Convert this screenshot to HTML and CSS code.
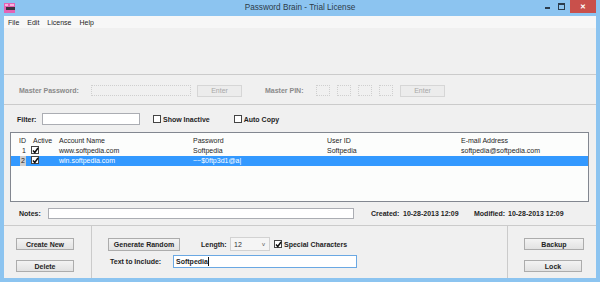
FILE: index.html
```html
<!DOCTYPE html>
<html>
<head>
    <title>Password Brain - Trial License</title>
    <link rel="stylesheet" href="styles.css">
</head>
<body>

<div class="window">
    <div class="titlebar">
        <svg class="appIcon" width="11" height="10" viewBox="0 0 11 10">
            <rect x="0" y="0" width="11" height="10" fill="#e563b4"/>
            <rect x="1" y="1" width="3" height="2" fill="#f7b3dc"/>
            <rect x="6" y="1" width="4" height="2" fill="#f7b3dc"/>
            <rect x="2" y="4" width="9" height="3" fill="#3a3540"/>
        </svg>
        <div class="title">Password Brain - Trial License</div>
        <div class="controls">
            <span class="ctl minBtn"></span>
            <span class="ctl maxBtn"></span>
            <span class="closeBtn">✕</span>
        </div>
    </div>

    <div class="client">
        <div class="menubar">
            <span>File</span>
            <span>Edit</span>
            <span>License</span>
            <span>Help</span>
        </div>

        <div class="spacer"></div>

        <div class="master">
            <span class="lbl dim pwLabel">Master Password:</span>
            <span class="field off pwField"></span>
            <span class="btn off enterBtn">Enter</span>
            <span class="lbl dim pinLabel">Master PIN:</span>
            <span class="field off pin"></span>
            <span class="field off pin"></span>
            <span class="field off pin"></span>
            <span class="field off pin"></span>
            <span class="btn off enterBtn">Enter</span>
        </div>

        <div class="filterRow">
            <span class="lbl filterLabel">Filter:</span>
            <span class="field filterField"></span>
            <span class="cb showInactive"></span>
            <span class="lbl">Show Inactive</span>
            <span class="cb autoCopy"></span>
            <span class="lbl">Auto Copy</span>
        </div>

        <div class="list">
            <table id="myTable">
                <colgroup>
                    <col class="cId">
                    <col class="cActive">
                    <col class="cWide">
                    <col class="cWide">
                    <col class="cWide">
                    <col>
                </colgroup>
                <thead>
                    <tr>
                        <th class="idCol">ID</th>
                        <th class="activeCol">Active</th>
                        <th>Account Name</th>
                        <th>Password</th>
                        <th>User ID</th>
                        <th>E-mail Address</th>
                    </tr>
                </thead>
                <tbody id="tableBody">
                    <tr>
                        <td class="idCol">1</td>
                        <td class="activeCol"><span class="cb on"><svg width="7" height="7" viewBox="0 0 7 7"><polyline points="1,3.5 2.8,5.5 6,1" fill="none" stroke="#111" stroke-width="1.5"/></svg></span></td>
                        <td>www.softpedia.com</td>
                        <td>Softpedia</td>
                        <td>Softpedia</td>
                        <td>softpedia@softpedia.com</td>
                    </tr>
                    <tr class="selected">
                        <td class="idCol"><span class="idMark">2</span></td>
                        <td class="activeCol"><span class="cb on"><svg width="7" height="7" viewBox="0 0 7 7"><polyline points="1,3.5 2.8,5.5 6,1" fill="none" stroke="#111" stroke-width="1.5"/></svg></span></td>
                        <td>win.softpedia.com</td>
                        <td>~~$0ftp3d1@a|</td>
                        <td></td>
                        <td></td>
                    </tr>
                </tbody>
            </table>
        </div>

        <div class="notesRow">
            <span class="lbl notesLabel">Notes:</span>
            <span class="field notesField"></span>
            <span class="lbl createdLabel">Created:</span>
            <span class="lbl dateVal">10-28-2013 12:09</span>
            <span class="lbl modifiedLabel">Modified:</span>
            <span class="lbl dateVal">10-28-2013 12:09</span>
        </div>

        <div class="bottom">
            <div class="leftCol">
                <span class="btn sideBtn">Create New</span>
                <span class="btn sideBtn">Delete</span>
            </div>
            <div class="midCol">
                <div class="genRow">
                    <span class="btn genBtn">Generate Random</span>
                    <span class="lbl lengthLabel">Length:</span>
                    <span class="select"><span>12</span><span class="chev">v</span></span>
                    <span class="cb on specialCb"><svg width="7" height="7" viewBox="0 0 7 7"><polyline points="1,3.5 2.8,5.5 6,1" fill="none" stroke="#111" stroke-width="1.5"/></svg></span>
                    <span class="lbl">Special Characters</span>
                </div>
                <div class="includeRow">
                    <span class="lbl includeLabel">Text to Include:</span>
                    <span class="field focus includeField">Softpedia<span class="caret"></span></span>
                </div>
            </div>
            <div class="rightCol">
                <span class="btn backupBtn">Backup</span>
                <span class="btn lockBtn">Lock</span>
            </div>
        </div>
    </div>
</div>

</body>
</html>
```

FILE: styles.css
```css
body {
    margin: 0;
    font-family: "Liberation Sans", Arial, sans-serif;
    font-size: 7px;
    color: #1e1e1e;
}

.window {
    width: 600px;
    height: 282px;
    background-color: #8cc4f0;
    padding: 0 4px 4px 4px;
    box-sizing: border-box;
    display: flex;
    flex-direction: column;
}

.titlebar {
    height: 16px;
    display: flex;
    align-items: flex-start;
    position: relative;
}

.appIcon {
    margin-top: 3px;
}

.title {
    position: absolute;
    left: 0;
    right: 0;
    top: 3px;
    text-align: center;
    font-size: 8.2px;
    color: #2c3b48;
}

.controls {
    margin-left: auto;
    display: flex;
    align-items: flex-start;
}

.ctl {
    display: inline-block;
    margin-top: 4px;
}

.minBtn {
    width: 5px;
    height: 2px;
    background-color: #2b3c4c;
    margin-top: 7px;
    margin-right: 8px;
}

.maxBtn {
    width: 5px;
    height: 4px;
    border: 1px solid #2b3c4c;
    border-top-width: 2px;
    margin-top: 3px;
    margin-right: 5px;
}

.closeBtn {
    width: 26px;
    height: 13px;
    background-color: #c9504b;
    color: white;
    font-size: 7px;
    font-weight: bold;
    text-align: center;
    line-height: 13px;
}

.client {
    flex: 1;
    background-color: #f0f0f0;
    display: flex;
    flex-direction: column;
}

.menubar {
    height: 12px;
    background-color: #f7f7f7;
    display: flex;
    align-items: center;
    padding-left: 4px;
    gap: 8px;
}

.spacer {
    height: 46px;
}

.lbl {
    font-weight: bold;
    white-space: nowrap;
}

.dim {
    color: #8a8a8a;
}

.field {
    display: inline-block;
    box-sizing: border-box;
    background-color: white;
    border: 1px solid #abadb3;
}

.field.off {
    background-color: #f0f0f0;
    border: 1px dotted #cfcfcf;
}

.btn {
    display: inline-flex;
    align-items: center;
    justify-content: center;
    box-sizing: border-box;
    font-weight: bold;
    background: linear-gradient(#f3f3f3, #e2e2e2);
    border: 1px solid #acacac;
    color: #1e1e1e;
}

.btn.off {
    background: #ececec;
    border: 1px solid #d6d6d6;
    color: #a8a8a8;
}

.master {
    height: 31px;
    box-sizing: border-box;
    border-top: 1px solid #cbcbcb;
    border-bottom: 1px solid #cbcbcb;
    display: flex;
    align-items: center;
    padding: 2px 0 0 15px;
}

.pwLabel {
    width: 72px;
}

.pwField {
    width: 100px;
    height: 11px;
}

.enterBtn {
    width: 45px;
    height: 12px;
    margin-left: 6px;
    font-weight: normal;
}

.pinLabel {
    margin-left: 23px;
    width: 51px;
}

.pin {
    width: 14px;
    height: 11px;
    margin-right: 7px;
}

.pin + .enterBtn {
    margin-left: 0;
}

.filterRow {
    height: 26px;
    display: flex;
    align-items: center;
    padding: 1px 0 0 13px;
}

.filterLabel {
    width: 25px;
}

.filterField {
    width: 98px;
    height: 12px;
}

.cb {
    display: inline-block;
    box-sizing: border-box;
    width: 8px;
    height: 8px;
    border: 1px solid #444;
    background-color: white;
    position: relative;
}

.cb svg {
    position: absolute;
    left: 0;
    top: 0;
}

.showInactive {
    margin-left: 13px;
    margin-right: 2px;
}

.autoCopy {
    margin-left: 24px;
    margin-right: 2px;
}

.list {
    height: 70px;
    margin: 0 7px 0 6px;
    box-sizing: border-box;
    border: 1px solid #828790;
    background-color: #fcfdfc;
    padding-top: 2px;
}

table {
    width: 100%;
    border-collapse: collapse;
    table-layout: fixed;
}

th, td {
    padding: 0 0 0 2px;
    text-align: left;
    font-weight: normal;
    height: 10px;
    line-height: 10px;
    white-space: nowrap;
    overflow: hidden;
}

th {
    height: 11px;
}

.cId {
    width: 19px;
}

.cActive {
    width: 27px;
}

.cWide {
    width: 134px;
}

.idCol {
    text-align: right;
    padding: 0 4px 0 0;
}

th.activeCol {
    padding-left: 3px;
}

td.activeCol {
    padding-left: 1px;
}

td.activeCol .cb {
    vertical-align: -1px;
}

.selected td {
    background-color: #3399ff;
    color: white;
}

.idMark {
    display: inline-block;
    background-color: #cdcdcd;
    color: #222;
    width: 6px;
    text-align: center;
}

.notesRow {
    height: 23px;
    display: flex;
    align-items: center;
    padding-left: 15px;
}

.notesLabel {
    width: 29px;
}

.notesField {
    width: 306px;
    height: 11px;
}

.createdLabel {
    margin-left: 17px;
    width: 32px;
}

.dateVal {
    width: 71px;
}

.modifiedLabel {
    width: 34px;
}

.bottom {
    flex: 1;
    border-top: 1px solid #cbcbcb;
    display: flex;
}

.leftCol, .rightCol {
    display: flex;
    flex-direction: column;
    padding: 12px 0 0 12px;
    gap: 10px;
}

.leftCol {
    width: 88px;
    box-sizing: border-box;
    border-right: 1px solid #cbcbcb;
}

.sideBtn {
    width: 58px;
    height: 12px;
}

.midCol {
    width: 416px;
    box-sizing: border-box;
    border-right: 1px solid #cbcbcb;
    padding: 11px 0 0 16px;
}

.genRow {
    display: flex;
    align-items: center;
    height: 14px;
}

.genBtn {
    width: 72px;
    height: 13px;
}

.lengthLabel {
    margin-left: 21px;
    width: 29px;
}

.select {
    width: 40px;
    height: 14px;
    box-sizing: border-box;
    border: 1px solid #d2d2d2;
    background-color: #f5f5f5;
    display: flex;
    align-items: center;
    justify-content: space-between;
    padding: 0 4px 0 3px;
    color: #333;
}

.chev {
    font-size: 6px;
    color: #555;
}

.specialCb {
    margin-left: 4px;
    margin-right: 2px;
}

.includeRow {
    display: flex;
    align-items: center;
    margin-top: 4px;
    height: 13px;
    padding-left: 2px;
}

.includeLabel {
    width: 63px;
}

.includeField {
    width: 184px;
    height: 13px;
    border-color: #6aa8e3;
    font-weight: bold;
    line-height: 11px;
    padding-left: 2px;
}

.caret {
    display: inline-block;
    width: 1px;
    height: 9px;
    background-color: #111;
    vertical-align: -2px;
}

.rightCol {
    flex: 1;
    padding-left: 16px;
}

.backupBtn {
    width: 60px;
    height: 12px;
}

.lockBtn {
    width: 58px;
    height: 12px;
}
```
